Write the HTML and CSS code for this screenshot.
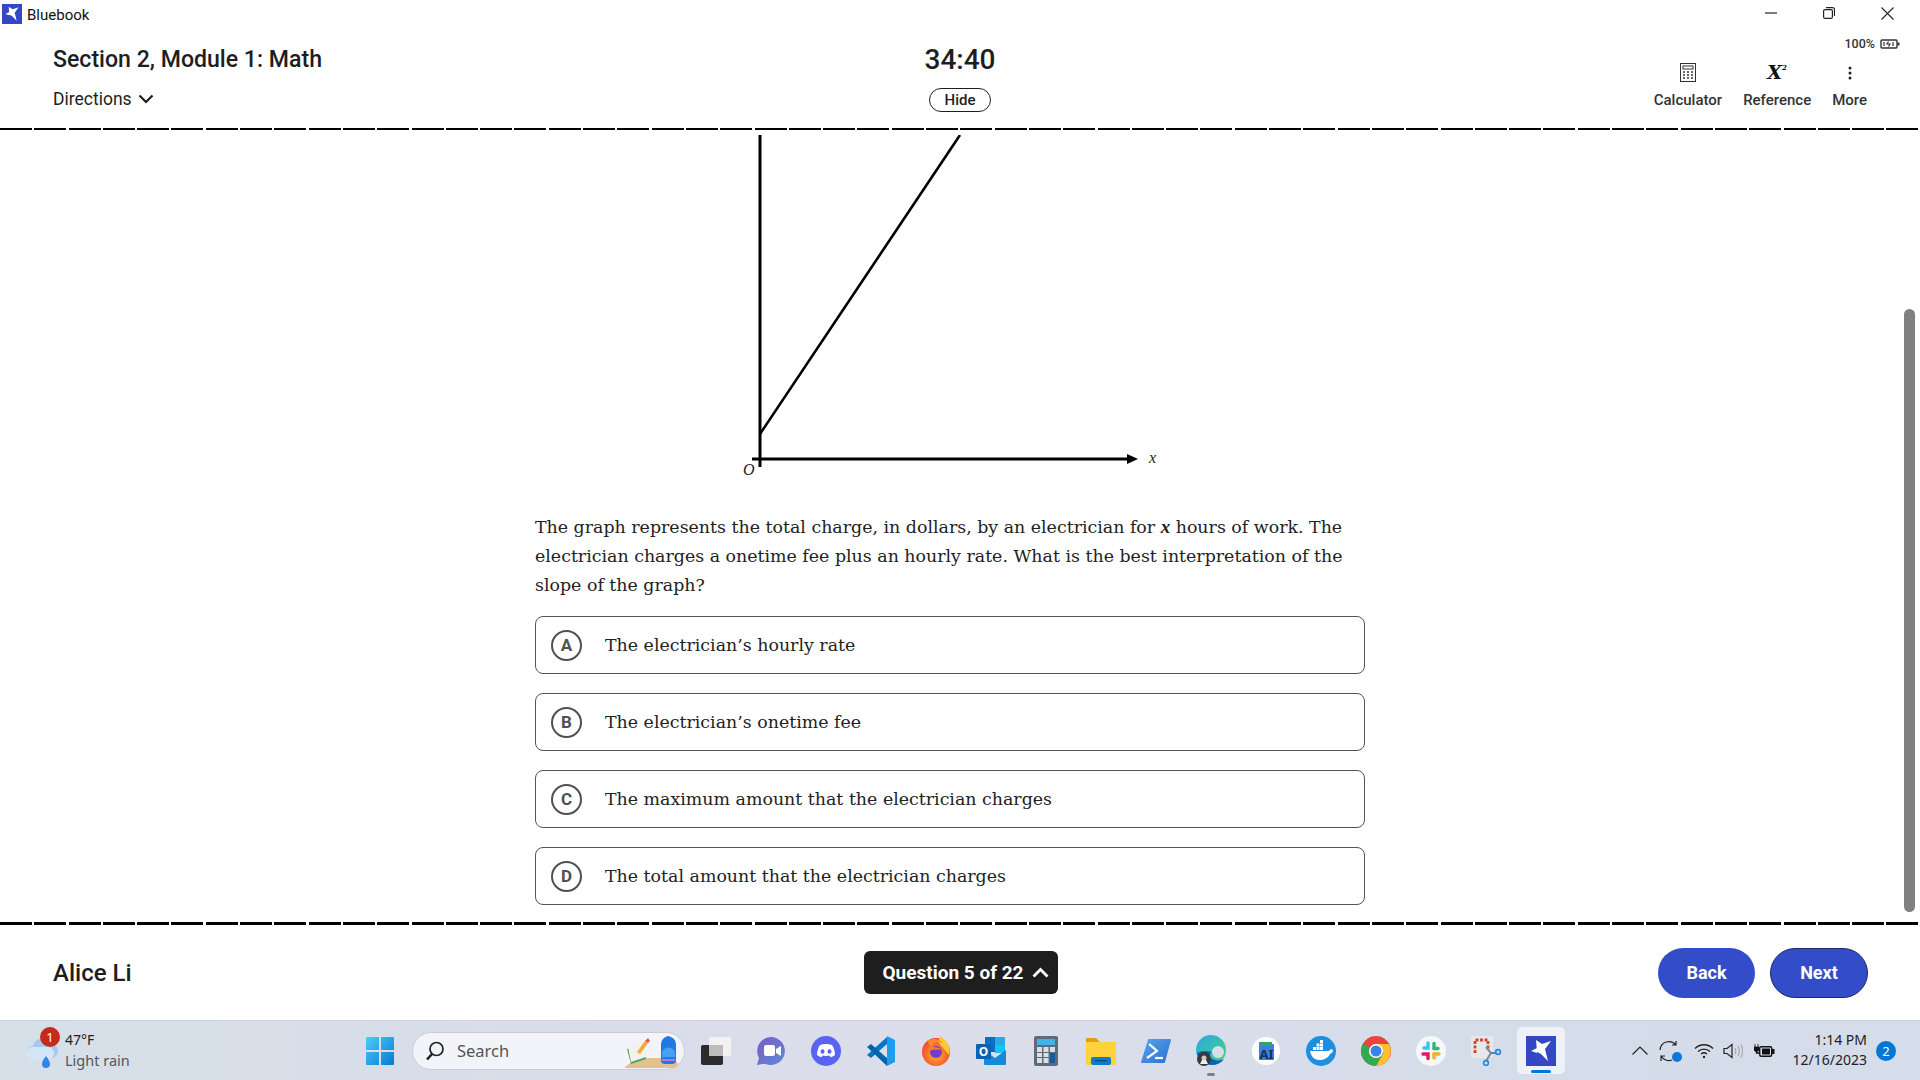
FILE: index.html
```html
<!DOCTYPE html>
<html lang="en">
<head>
    <meta charset="UTF-8">
    <title>Bluebook</title>
    <link rel="stylesheet" href="styles.css">
</head>
<body>

<div class="titlebar">
    <div class="app-name">
        <svg class="app-logo" viewBox="0 0 30 30"><rect width="30" height="30" fill="#3548c4"/><path d="M5 15l6-3v5zM10 4l6 4 9-3-6 8 3 12-7-7-4-2z" fill="#fff"/></svg>
        <span>Bluebook</span>
    </div>
    <div class="win-controls">
        <span class="win-btn"><svg width="12" height="12" viewBox="0 0 12 12"><path d="M0 6h12" stroke="#222" stroke-width="1.2"/></svg></span>
        <span class="win-btn"><svg width="12" height="12" viewBox="0 0 12 12" fill="none" stroke="#222" stroke-width="1.2"><rect x=".6" y="2.6" width="8.8" height="8.8" rx="1.5"/><path d="M3 .6h6.5a2 2 0 0 1 2 2V9"/></svg></span>
        <span class="win-btn"><svg width="13" height="13" viewBox="0 0 13 13"><path d="M.5.5l12 12M12.5.5l-12 12" stroke="#222" stroke-width="1.1"/></svg></span>
    </div>
</div>

<header class="header">
    <div class="header-left">
        <h1>Section 2, Module 1: Math</h1>
        <div class="directions">Directions
            <svg width="16" height="10" viewBox="0 0 16 10" fill="none" stroke="#1e1e1e" stroke-width="2.2"><path d="M1.5 1.5L8 8l6.5-6.5"/></svg>
        </div>
    </div>
    <div class="timer-wrap">
        <div class="timer">34:40</div>
        <div class="hide-btn">Hide</div>
    </div>
    <div class="header-right">
        <div class="battery">100%
            <svg width="20" height="10" viewBox="0 0 20 10" fill="none" stroke="#333" stroke-width="1.4"><rect x="1" y="1" width="16" height="8" rx="1"/><path d="M18.5 3.500v3" stroke-width="2"/><path d="M4 3v4M8.500 2.500L7 5h3L8.500 7.500M13 3v4" stroke-width="1.2"/></svg>
        </div>
        <div class="tools">
            <div class="tool">
                <svg class="tool-icon" width="16" height="19" viewBox="0 0 16 19" fill="none" stroke="#333"><rect x=".5" y=".5" width="15" height="18"/><rect x="3" y="3" width="10" height="3"/><path d="M3 9h2M7 9h2M11 9h2M3 12h2M7 12h2M11 12h2M3 15h2M7 15h2M11 15h2" stroke-width="1.6"/></svg>
                <span>Calculator</span>
            </div>
            <div class="tool">
                <span class="tool-icon x-squared">X<sup>2</sup></span>
                <span>Reference</span>
            </div>
            <div class="tool">
                <svg class="tool-icon tool-dots" width="4" height="14" viewBox="0 0 4 14" fill="#222"><circle cx="2" cy="2" r="1.5"/><circle cx="2" cy="7" r="1.5"/><circle cx="2" cy="12" r="1.5"/></svg>
                <span>More</span>
            </div>
        </div>
    </div>
</header>
<div class="dash dash-top"></div>

<div class="main">
    <div class="scroll-area">
        <div class="question">
            <svg class="graph" width="830" height="378" viewBox="535 135 830 378">
                <g stroke="#000" fill="none">
                    <path d="M760 135V467" stroke-width="3"/>
                    <path d="M752 459H1128" stroke-width="3"/>
                    <path d="M760 434L960 135" stroke-width="2.6"/>
                </g>
                <path d="M1127 454l11 5-11 5z" fill="#000"/>
                <text x="1149" y="463" class="graph-label">x</text>
                <text x="743" y="475" class="graph-label">O</text>
            </svg>
            <p class="stem">The graph represents the total charge, in dollars, by an electrician for <i class="math">x</i> hours of work. The electrician charges a onetime fee plus an hourly rate. What is the best interpretation of the slope of the graph?</p>
            <div class="options">
                <div class="option"><span class="letter">A</span><span>The electrician’s hourly rate</span></div>
                <div class="option"><span class="letter">B</span><span>The electrician’s onetime fee</span></div>
                <div class="option"><span class="letter">C</span><span>The maximum amount that the electrician charges</span></div>
                <div class="option"><span class="letter">D</span><span>The total amount that the electrician charges</span></div>
            </div>
        </div>
    </div>
    <div class="scroll-track"><div class="scroll-thumb"></div></div>
</div>

<div class="dash dash-bottom"></div>
<footer class="footer">
    <div class="student">Alice Li</div>
    <div class="nav-center">
        <div class="question-nav">Question 5 of 22
            <svg width="17" height="11" viewBox="0 0 17 11" fill="none" stroke="#fff" stroke-width="2.8"><path d="M1.500 9.500L8.500 2.500l7 7"/></svg>
        </div>
    </div>
    <div class="nav-btns">
        <div class="nav-btn">Back</div>
        <div class="nav-btn nav-next">Next</div>
    </div>
</footer>

<div class="taskbar">
    <div class="weather">
        <div class="weather-icon">
            <svg width="34" height="40" viewBox="0 0 34 40"><path d="M9 27a6 6 0 0 1-1-12 9 9 0 0 1 17-2 7 7 0 0 1 2 14z" fill="#a5c9f0"/><path d="M2 22a6 6 0 0 1 6-6h15a6 6 0 0 1 0 12H8a6 6 0 0 1-6-6z" fill="#d3e6f8"/><path d="M21 25c2 3 4 5 4 8a4 4 0 0 1-8 0c0-3 2-5 4-8z" fill="#2f87ea"/></svg>
            <span class="weather-badge">1</span>
        </div>
        <div class="weather-text">
            <div>47°F</div>
            <div class="weather-sub">Light rain</div>
        </div>
    </div>
    <div class="task-center">
        <div class="task-icon">
            <svg width="30" height="30" viewBox="0 0 30 30"><defs><linearGradient id="win" x1="0" y1="0" x2="1" y2="1"><stop offset="0" stop-color="#4ccdf8"/><stop offset="1" stop-color="#0678d2"/></linearGradient></defs><path d="M1 2a1 1 0 0 1 1-1h12v13H1zM16 1h12a1 1 0 0 1 1 1v12H16zM1 16h13v13H2a1 1 0 0 1-1-1zM16 16h13v12a1 1 0 0 1-1 1H16z" fill="url(#win)"/></svg>
        </div>
        <div class="search">
            <svg width="20" height="20" viewBox="0 0 20 20" fill="none" stroke="#222"><circle cx="11.500" cy="8" r="6.500" stroke-width="1.7"/><path d="M7 13l-5 5.500" stroke-width="2.6"/></svg>
            <span class="search-label">Search</span>
            <svg class="search-art" width="66" height="36" viewBox="0 0 66 36"><path d="M10 34L22 25H56L64 31 60 35H10z" fill="#e3c08e"/><path d="M12 16l16-5 3 15-15 5z" fill="#4aa564"/><path d="M13 14l15-5 3 15-15 5z" fill="#f2f2ea"/><path d="M22 19l8-11 3 2-8 11z" fill="#f5a833"/><path d="M30 8l3-3 2 3-2 2z" fill="#e2574c"/><path d="M46 12c0-5 3-8 7-9 5 1 8 4 8 9v15a4 4 0 0 1-4 4h-7a4 4 0 0 1-4-4z" fill="#1f78e4"/><path d="M47 20a6 5 0 0 1 13 0v4H47z" fill="#4aa0f3"/><path d="M47 26h13v2H47z" fill="#a97ef0"/></svg>
        </div>
        <div class="task-list">
            <div class="task-icon">
                <svg width="32" height="30" viewBox="0 0 32 30"><rect x="1" y="9" width="22" height="20" rx="2" fill="#2b2b2b"/><rect x="9" y="1" width="22" height="19" rx="1" fill="#f2f2f2"/><rect x="9" y="9" width="14" height="11" fill="#bdbdbd"/></svg>
            </div>
            <div class="task-icon">
                <svg width="30" height="30" viewBox="0 0 30 30"><defs><linearGradient id="zoomg" x1="0" y1="0" x2="1" y2="1"><stop offset="0" stop-color="#7c5cc4"/><stop offset="1" stop-color="#5c8ad6"/></linearGradient></defs><path d="M15 1a14 14 0 1 1-6 26.700L1 29l2-7A14 14 0 0 1 15 1z" fill="url(#zoomg)"/><rect x="8" y="9" width="11" height="11" rx="2" fill="#fff"/><path d="M20 13l5-3v10l-5-3z" fill="#fff"/></svg>
            </div>
            <div class="task-icon">
                <svg width="30" height="30" viewBox="0 0 30 30"><circle cx="15" cy="15" r="15" fill="#5865f2"/><path d="M9 9c4-1.300 8-1.300 12 0 2 3 3 6.500 3 10-1.500 1.200-3 1.800-4.500 2.200l-1-1.700c-2.300.6-4.700.6-7 0l-1 1.700C9 20.800 7.500 20.200 6 19c0-3.500 1-7 3-10z" fill="#fff"/><ellipse cx="11.500" cy="15.500" rx="2" ry="2.300" fill="#5865f2"/><ellipse cx="18.500" cy="15.500" rx="2" ry="2.300" fill="#5865f2"/></svg>
            </div>
            <div class="task-icon">
                <svg width="30" height="30" viewBox="0 0 30 30"><path d="M1 19L21 1v7L5 22z" fill="#0078c4"/><path d="M1 11l4-3 17 15-1 7z" fill="#0065a9"/><path d="M21 0l8 4v22l-8 4z" fill="#1f9cf0"/></svg>
            </div>
            <div class="task-icon">
                <svg width="30" height="30" viewBox="0 0 30 30"><defs><radialGradient id="fox" cx=".5" cy=".6" r=".6"><stop offset="0" stop-color="#ffb327"/><stop offset="1" stop-color="#f0402e"/></radialGradient></defs><circle cx="15" cy="16" r="14" fill="url(#fox)"/><path d="M19 0c8 5 11 12 9 19L17 6z" fill="#ffc93c"/><path d="M6 5c4-3 12-3 16 2-6-2-10 0-12 4z" fill="#ff8a2a"/><circle cx="15" cy="16" r="6" fill="#6f3fc4"/><path d="M7 12c5-2 12-1 15 3-3-2-10-2-15 1z" fill="#ff7a2c"/></svg>
            </div>
            <div class="task-icon">
                <svg width="30" height="30" viewBox="0 0 30 30"><rect x="9" y="1" width="20" height="15" fill="#0d6fc4"/><rect x="19" y="1" width="10" height="8" fill="#2aa8e8"/><rect x="19" y="9" width="10" height="8" fill="#18c2f2"/><path d="M8 14l11 8 11-8v14a1 1 0 0 1-1 1H9a1 1 0 0 1-1-1z" fill="#1689d8"/><rect y="8" width="15" height="15" rx="1" fill="#0a62b2"/><text x="7.500" y="20" class="outlook-o">O</text></svg>
            </div>
            <div class="task-icon">
                <svg width="24" height="30" viewBox="0 0 24 30"><rect width="24" height="30" rx="2" fill="#5d6c7b"/><rect x="3" y="3" width="18" height="6" fill="#3fb5e6"/><g fill="#d9dfe4"><rect x="3" y="11" width="5" height="5"/><rect x="9.500" y="11" width="5" height="5"/><rect x="16" y="11" width="5" height="5"/><rect x="3" y="17" width="5" height="4"/><rect x="9.500" y="17" width="5" height="4"/><rect x="3" y="22" width="5" height="5"/><rect x="9.500" y="22" width="5" height="5"/></g><rect x="16" y="17" width="5" height="10" fill="#155a9c"/></svg>
            </div>
            <div class="task-icon">
                <svg width="32" height="28" viewBox="0 0 32 28"><path d="M1 2a1 1 0 0 1 1-1h9l4 4h16v5H1z" fill="#dfa10f"/><rect x="1" y="5" width="30" height="23" rx="1" fill="#fdd23f"/><rect x="6" y="20" width="20" height="8" rx="2" fill="#0f7ccb"/><rect x="10" y="23" width="12" height="1.500" fill="#0b4f86"/></svg>
            </div>
            <div class="task-icon">
                <svg width="30" height="24" viewBox="0 0 30 24"><defs><linearGradient id="ps" x1="0" y1="0" x2="1" y2="1"><stop offset="0" stop-color="#55a6ef"/><stop offset="1" stop-color="#2e6fd0"/></linearGradient></defs><path d="M7 1a1 1 0 0 1 1-1h21a1 1 0 0 1 1 1l-6 22a1 1 0 0 1-1 1H1a1 1 0 0 1-1-1z" fill="url(#ps)"/><path d="M8 5l8 7-10 7" fill="none" stroke="#fff" stroke-width="2.200"/><path d="M14 19h8" stroke="#fff" stroke-width="2.200"/></svg>
            </div>
            <div class="task-icon">
                <svg width="32" height="32" viewBox="0 0 32 32"><defs><linearGradient id="edge" x1="0" y1="0" x2="1" y2="1"><stop offset="0" stop-color="#2aa8e8"/><stop offset="1" stop-color="#44d47a"/></linearGradient></defs><circle cx="16" cy="15" r="15" fill="url(#edge)"/><path d="M2 18c2 7 8 12 15 12 5 0 9-2 12-6-4 2-10 2-13-1-2-2-1-5 1-6-6-2-12-1-15 1z" fill="#0c62b6"/><circle cx="23" cy="17" r="6" fill="#d6deea"/><circle cx="9" cy="24" r="7" fill="#3a3a3a"/><circle cx="9" cy="23" r="2.500" fill="#d8c6bc"/><path d="M5 29l2-4h4l2 4z" fill="#eee"/></svg>
                <span class="running-dot"></span>
            </div>
            <div class="task-icon">
                <svg width="28" height="28" viewBox="0 0 28 28"><circle cx="14" cy="14" r="14" fill="#fff"/><rect x="7" y="7" width="15" height="16" rx="1" fill="#3d7fe0"/><rect x="7" y="5" width="13" height="4" fill="#2fa56c"/><text x="14.500" y="22" class="ai-label">AI</text></svg>
            </div>
            <div class="task-icon">
                <svg width="30" height="30" viewBox="0 0 30 30"><circle cx="15" cy="15" r="15" fill="#1d8fe1"/><path d="M4 15h19c1-2 3-2 4-1 0 2-1 3-3 4-2 4-6 6-11 6-5 0-8-4-9-9z" fill="#fff"/><g fill="#fff"><rect x="7" y="11" width="3" height="3"/><rect x="10.500" y="11" width="3" height="3"/><rect x="14" y="11" width="3" height="3"/><rect x="10.500" y="7.500" width="3" height="3"/><rect x="14" y="7.500" width="3" height="3"/><rect x="14" y="4" width="3" height="3"/></g></svg>
            </div>
            <div class="task-icon">
                <svg width="30" height="30" viewBox="0 0 30 30"><circle cx="15" cy="15" r="15" fill="#e8453c"/><path d="M15 15L2 7.500A15 15 0 0 0 15 30l7.500-13z" fill="#34a853"/><path d="M15 8h13a15 15 0 0 1-13 22l7.500-13z" fill="#fbc02d"/><circle cx="15" cy="15" r="7" fill="#fff"/><circle cx="15" cy="15" r="5.500" fill="#3b82e8"/></svg>
            </div>
            <div class="task-icon">
                <svg width="30" height="30" viewBox="0 0 30 30"><circle cx="15" cy="15" r="15" fill="#f6f7f8"/><g fill="none" stroke-width="3.400" stroke-linecap="round"><path d="M12 7v5H8" stroke="#36c5f0"/><path d="M18 7.500v5" stroke="#2eb67d"/><path d="M18 12.500h4" stroke="#2eb67d"/><path d="M7 18h5v4.500" stroke="#e01e5a"/><path d="M18 18h5" stroke="#ecb22e"/><path d="M18 18v4" stroke="#ecb22e"/></g></svg>
            </div>
            <div class="task-icon">
                <svg width="32" height="30" viewBox="0 0 32 30"><rect x="1" width="22" height="22" rx="2" fill="#e6e8ea"/><path d="M5 17V4h13v9" fill="none" stroke="#d8412f" stroke-width="2.800" stroke-dasharray="3 1.500"/><path d="M16 11l5 6-5 8" fill="none" stroke="#7f8a94" stroke-width="2"/><path d="M21 17h6" stroke="#2a87d8" stroke-width="1.800"/><circle cx="28" cy="16" r="2.400" fill="none" stroke="#2a87d8" stroke-width="1.600"/><circle cx="16" cy="27" r="2.400" fill="none" stroke="#2a87d8" stroke-width="1.600"/></svg>
            </div>
            <div class="task-icon task-active">
                <svg width="30" height="30" viewBox="0 0 30 30"><rect width="30" height="30" fill="#3548c4"/><path d="M5 15l6-3v5zM10 4l6 4 9-3-6 8 3 12-7-7-4-2z" fill="#fff"/></svg>
                <span class="active-bar"></span>
            </div>
        </div>
    </div>
    <div class="tray">
        <svg class="tray-caret" width="16" height="9" viewBox="0 0 16 9" fill="none" stroke="#222" stroke-width="1.200"><path d="M.5 8.500L8 1l7.500 7.500"/></svg>
        <div class="tray-sync">
            <svg width="22" height="22" viewBox="0 0 22 22" fill="none" stroke="#222" stroke-width="1.200"><path d="M2 10A9 9 0 0 1 18 5M18 1v4h-4M14 20A9 9 0 0 1 3 16M3 21v-5h4"/></svg>
            <span class="sync-dot"></span>
        </div>
        <svg width="20" height="16" viewBox="0 0 20 16" fill="none" stroke="#222" stroke-width="1.300"><path d="M1 5.500c5-5 13-5 18 0M4 8.500c3.500-3.200 8.500-3.200 12 0M7 11c1.800-1.500 4.200-1.500 6 0"/><circle cx="10" cy="14" r="1.200" fill="#222" stroke="none"/></svg>
        <svg width="20" height="16" viewBox="0 0 20 16" fill="none" stroke="#222" stroke-width="1.200"><path d="M1 5.500h3L9 1.500v13l-5-4H1z"/><path d="M12 5c1 2 1 4 0 6M15 3c1.600 3 1.600 7 0 10M18 1.500c2 4 2 9 0 13" stroke="#aaa"/></svg>
        <svg class="tray-plug" width="21" height="16" viewBox="0 0 21 16"><path d="M1 1v3M4 1v3M0 4h5v2a2.500 2.500 0 0 1-5 0z" stroke="#111" fill="#111" stroke-width=".8"/><path d="M2.500 8v2h3" stroke="#111" fill="none" stroke-width="1.300"/><rect x="5.700" y="3.700" width="12" height="9.600" rx="1.500" fill="none" stroke="#111" stroke-width="1.400"/><rect x="8" y="5.500" width="8" height="6" fill="#111"/><rect x="18" y="6" width="2.500" height="5" fill="#111"/></svg>
        <div class="clock">
            <div>1:14 PM</div>
            <div>12/16/2023</div>
        </div>
        <span class="notif">2</span>
    </div>
</div>

</body>
</html>
```

FILE: styles.css
```css
html, body {
    margin: 0;
    height: 100%;
}
body {
    display: flex;
    flex-direction: column;
    height: 100vh;
    overflow: hidden;
    background: #fff;
    color: #1e1e1e;
    font-family: Roboto, sans-serif;
}
.titlebar {
    display: flex;
    justify-content: space-between;
    align-items: flex-start;
    height: 30px;
    flex: none;
}
.app-name {
    display: flex;
    align-items: center;
    gap: 5px;
    padding: 4px 0 0 2px;
    font-size: 15px;
    color: #111;
}
.app-name span {
    padding-top: 2px;
}
.app-logo {
    width: 20px;
    height: 20px;
}
.win-controls {
    display: flex;
    padding: 7px 3px 0 0;
}
.win-btn {
    display: flex;
    justify-content: center;
    width: 58.5px;
}

.header {
    display: grid;
    grid-template-columns: 1fr auto 1fr;
    height: 98px;
    flex: none;
}
.header-left {
    padding-left: 53px;
}
h1 {
    margin: 14px 0 0;
    font-size: 23.1px;
    line-height: 32px;
    font-weight: 500;
}
.directions {
    display: flex;
    align-items: center;
    gap: 6px;
    margin-top: 11px;
    font-size: 17.5px;
    line-height: 24px;
}
.timer-wrap {
    display: flex;
    flex-direction: column;
    align-items: center;
    padding-top: 14px;
}
.timer {
    font-size: 28px;
    line-height: 32px;
    font-weight: 500;
}
.hide-btn {
    width: 60px;
    height: 22px;
    margin-top: 12px;
    border: 1px solid #1e1e1e;
    border-radius: 12px;
    text-align: center;
    font-size: 15px;
    line-height: 22px;
    font-weight: 500;
}
.header-right {
    display: flex;
    flex-direction: column;
    align-items: flex-end;
    padding-right: 20px;
}
.battery {
    display: flex;
    align-items: center;
    gap: 5px;
    margin-top: 7px;
    font-size: 12.5px;
    line-height: 14px;
    font-weight: 500;
    color: #333;
}
.tools {
    display: flex;
    gap: 21px;
    padding-right: 33px;
    margin-top: 12px;
}
.tool {
    display: flex;
    flex-direction: column;
    align-items: center;
    font-size: 15px;
    line-height: 18px;
    font-weight: 500;
    color: #333;
}
.tool-icon {
    height: 19px;
    margin-bottom: 9px;
}
.tool-dots {
    margin-top: 3px;
    height: 14px;
    margin-bottom: 11px;
}
.x-squared {
    font-family: "DejaVu Serif", serif;
    font-style: italic;
    font-weight: 700;
    font-size: 19px;
    line-height: 19px;
    color: #111;
}
.x-squared sup {
    font-size: 7px;
    line-height: 0;
    vertical-align: 9px;
}

.dash {
    flex: none;
    background: repeating-linear-gradient(90deg, #000 0, #000 32px, transparent 32px, transparent 34.3px);
}
.dash-top {
    height: 2px;
}
.dash-bottom {
    height: 3px;
}

.main {
    display: flex;
    flex: 1;
    min-height: 0;
}
.scroll-area {
    flex: 1;
    display: flex;
    justify-content: center;
    overflow: hidden;
    padding-top: 5px;
}
.question {
    width: 830px;
}
.graph {
    display: block;
}
.graph-label {
    font-family: "Liberation Serif", serif;
    font-style: italic;
    font-size: 16px;
    fill: #222;
}
.stem {
    margin: 0;
    font-family: "DejaVu Serif", serif;
    font-size: 17.4px;
    line-height: 29px;
    color: #222;
}
.math {
    font-family: "Liberation Serif", serif;
    font-weight: 700;
    font-size: 19px;
    line-height: 0;
}
.options {
    display: flex;
    flex-direction: column;
    gap: 19px;
    margin-top: 16px;
}
.option {
    display: flex;
    align-items: center;
    gap: 23px;
    box-sizing: border-box;
    height: 58px;
    padding-left: 15px;
    border: 1px solid #555;
    border-radius: 8px;
    font-family: "DejaVu Serif", serif;
    font-size: 17.4px;
    color: #222;
}
.letter {
    box-sizing: border-box;
    width: 31px;
    height: 31px;
    border: 2px solid #505050;
    border-radius: 50%;
    text-align: center;
    font-family: Roboto, sans-serif;
    font-size: 17px;
    line-height: 27px;
    font-weight: 700;
    color: #505050;
}
.scroll-track {
    flex: none;
    box-sizing: border-box;
    width: 20px;
    padding: 179px 5px 0 4px;
}
.scroll-thumb {
    height: 603px;
    border-radius: 6px;
    background: #808080;
}

.footer {
    display: grid;
    grid-template-columns: 1fr auto 1fr;
    align-items: center;
    height: 95px;
    flex: none;
    padding: 0 53px;
}
.student {
    font-size: 24px;
    font-weight: 500;
}
.nav-center {
    margin-left: 1px;
}
.question-nav {
    display: flex;
    align-items: center;
    gap: 8px;
    height: 43px;
    padding: 0 9px 0 19px;
    border-radius: 6px;
    background: #1e1e1e;
    color: #fff;
    font-size: 19px;
    font-weight: 700;
}
.nav-btns {
    display: flex;
    justify-content: flex-end;
    gap: 15px;
}
.nav-btn {
    box-sizing: border-box;
    width: 97px;
    height: 50px;
    border-radius: 25px;
    background: #324dc7;
    color: #fff;
    text-align: center;
    font-size: 18px;
    line-height: 50px;
    font-weight: 700;
}
.nav-next {
    width: 98px;
    margin-right: -1px;
    border: 1px solid #1e2a66;
    line-height: 48px;
}

.taskbar {
    display: flex;
    align-items: center;
    box-sizing: border-box;
    height: 60px;
    flex: none;
    border-top: 1px solid #cfd3de;
    background: linear-gradient(90deg, #d6e0e9, #d9dde9 30%, #dcdeeb 50%, #d5dde9 75%, #d5dcea);
    font-family: "Noto Sans", sans-serif;
    color: #222;
}
.weather {
    display: flex;
    align-items: center;
    gap: 6px;
    box-sizing: border-box;
    width: 352px;
    padding-left: 25px;
    font-size: 14px;
    line-height: 20px;
}
.weather-icon {
    position: relative;
    width: 34px;
    height: 40px;
}
.weather-badge {
    position: absolute;
    top: -4px;
    left: 15px;
    width: 20px;
    height: 20px;
    border-radius: 50%;
    background: #c42b1c;
    color: #fff;
    text-align: center;
    font-size: 13px;
    line-height: 20px;
}
.weather-text {
    margin-top: -2px;
}
.weather-sub {
    color: #555;
    font-size: 14.5px;
}
.task-center {
    display: flex;
    align-items: center;
}
.task-icon {
    position: relative;
    display: flex;
    justify-content: center;
    align-items: center;
    width: 55px;
    height: 47px;
}
.search {
    display: flex;
    align-items: center;
    box-sizing: border-box;
    width: 273px;
    height: 38px;
    margin: 0 3px 0 5px;
    padding-left: 12px;
    border: 1px solid #c9cdd8;
    border-radius: 19px;
    background: #f2f4f9;
}
.search-label {
    margin-left: 12px;
    font-size: 16.5px;
    color: #555;
}
.search-art {
    margin-left: auto;
    margin-right: 3px;
    align-self: flex-end;
}
.task-list {
    display: flex;
}
.task-active {
    width: 48px;
    margin-left: 4px;
    border-radius: 5px;
    background: #eef1f8;
}
.running-dot {
    position: absolute;
    bottom: -2px;
    left: 24px;
    width: 8px;
    height: 3px;
    border-radius: 2px;
    background: #7a7f88;
}
.active-bar {
    position: absolute;
    bottom: 1px;
    left: 14px;
    width: 20px;
    height: 3px;
    border-radius: 2px;
    background: #0078d4;
}
.outlook-o {
    font-family: "Noto Sans", sans-serif;
    font-weight: 700;
    font-size: 12px;
    text-anchor: middle;
    fill: #fff;
}
.ai-label {
    font-family: "Noto Sans", sans-serif;
    font-weight: 700;
    font-size: 13px;
    text-anchor: middle;
    fill: #14305e;
}
.tray {
    display: flex;
    align-items: center;
    gap: 9px;
    margin-left: auto;
    padding-right: 24px;
}
.tray-caret {
    margin-right: 1px;
}
.tray-sync {
    position: relative;
    width: 24px;
    height: 22px;
    margin-right: 3px;
}
.tray-plug {
    margin-left: 2px;
}
.sync-dot {
    position: absolute;
    right: 0;
    bottom: 0;
    width: 10px;
    height: 10px;
    border-radius: 50%;
    background: #0a78d6;
}
.clock {
    margin-left: 9px;
    margin-top: -2px;
    text-align: right;
    font-size: 14px;
    line-height: 20px;
}
.notif {
    width: 20px;
    height: 20px;
    border-radius: 50%;
    background: #0078d4;
    color: #fff;
    text-align: center;
    font-size: 13px;
    line-height: 20px;
}
```
